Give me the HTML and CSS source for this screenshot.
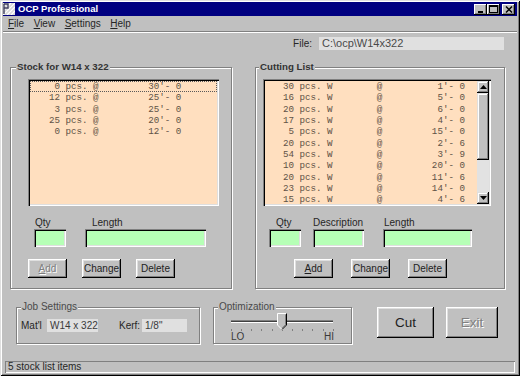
FILE: index.html
```html
<!DOCTYPE html>
<html lang="en">
<head>
<meta charset="utf-8">
<title>OCP Professional</title>
<link rel="stylesheet" href="styles.css">
</head>
<body>
<div class="window">
  <div class="titlebar">
    <svg class="app-icon" width="12" height="12" viewBox="0 0 12 12">
      <rect x="0" y="0" width="12" height="12" fill="#d8d8d8"/>
      <path d="M0 4 L4 0 M0 8 L8 0 M0 12 L12 0 M4 12 L12 4 M8 12 L12 8" stroke="#ffffff" stroke-width="1.2"/>
      <path d="M1 1 V11 M1 1 H5 V5 H1" stroke="#404060" stroke-width="1.4" fill="none"/>
    </svg>
    <span class="title-text">OCP Professional</span>
    <div class="win-btns">
      <span class="win-btn"><svg width="8" height="7" viewBox="0 0 8 7"><rect x="1" y="5" width="5" height="2" fill="#000"/></svg></span>
      <span class="win-btn"><svg width="9" height="8" viewBox="0 0 9 8"><rect x="0.5" y="0.5" width="8" height="7" fill="none" stroke="#000"/><rect x="0" y="0" width="9" height="2" fill="#000"/></svg></span>
      <span class="win-btn close"><svg width="8" height="7" viewBox="0 0 8 7"><path d="M1 0.5 L7 6.5 M7 0.5 L1 6.5" stroke="#000" stroke-width="1.5"/></svg></span>
    </div>
  </div>

  <div class="menubar">
    <span class="menu-item"><u>F</u>ile</span>
    <span class="menu-item"><u>V</u>iew</span>
    <span class="menu-item"><u>S</u>ettings</span>
    <span class="menu-item"><u>H</u>elp</span>
  </div>

  <div class="client">
    <div class="file-row">
      <span class="file-label">File:</span>
      <div class="file-field">C:\ocp\W14x322</div>
    </div>

    <div class="groups">
      <div class="group stock">
        <div class="group-title strong">Stock for W14 x 322</div>
        <div class="listbox stock-list">
          <div class="list-lines stock-lines">
            <div class="row focused"> 0 pcs. @         30'- 0</div>
            <div class="row">12 pcs. @         25'- 0</div>
            <div class="row"> 3 pcs. @         25'- 0</div>
            <div class="row">25 pcs. @         20'- 0</div>
            <div class="row"> 0 pcs. @         12'- 0</div>
          </div>
        </div>
        <div class="fields stock-fields">
          <div class="field">
            <span class="field-label ind-1">Qty</span>
            <div class="input w-qty"></div>
          </div>
          <div class="field gap-19">
            <span class="field-label ind-7">Length</span>
            <div class="input w-len-stock"></div>
          </div>
        </div>
        <div class="buttons stock-buttons">
          <span class="btn disabled"><span><u>A</u>dd</span></span>
          <span class="btn">Change</span>
          <span class="btn">Delete</span>
        </div>
      </div>

      <div class="group cutting">
        <div class="group-title strong cut-title">Cutting List</div>
        <div class="listbox cut-list">
          <div class="list-lines cut-lines">
            <div class="row">30 pcs. W        @          1'- 0</div>
            <div class="row">16 pcs. W        @          5'- 0</div>
            <div class="row">20 pcs. W        @          6'- 0</div>
            <div class="row">17 pcs. W        @          4'- 0</div>
            <div class="row"> 5 pcs. W        @         15'- 0</div>
            <div class="row">20 pcs. W        @          2'- 6</div>
            <div class="row">54 pcs. W        @          3'- 9</div>
            <div class="row">10 pcs. W        @         20'- 0</div>
            <div class="row">20 pcs. W        @         11'- 6</div>
            <div class="row">23 pcs. W        @         14'- 0</div>
            <div class="row">15 pcs. W        @          4'- 6</div>
          </div>
          <div class="scrollbar">
            <div class="sb-btn"><svg width="7" height="4" viewBox="0 0 7 4"><path d="M3.5 0 L7 4 H0 Z" fill="#000"/></svg></div>
            <div class="sb-thumb"></div>
            <div class="sb-track"></div>
            <div class="sb-btn"><svg width="7" height="4" viewBox="0 0 7 4"><path d="M0 0 H7 L3.5 4 Z" fill="#000"/></svg></div>
          </div>
        </div>
        <div class="fields cut-fields">
          <div class="field">
            <span class="field-label ind-7">Qty</span>
            <div class="input w-qty"></div>
          </div>
          <div class="field gap-12">
            <span class="field-label ind-0">Description</span>
            <div class="input w-desc"></div>
          </div>
          <div class="field gap-19">
            <span class="field-label ind-1">Length</span>
            <div class="input w-len-cut"></div>
          </div>
        </div>
        <div class="buttons cut-buttons">
          <span class="btn"><span><u>A</u>dd</span></span>
          <span class="btn">Change</span>
          <span class="btn">Delete</span>
        </div>
      </div>
    </div>

    <div class="bottom-row">
      <div class="group job">
        <div class="group-title light">Job Settings</div>
        <div class="job-row">
          <span class="job-label mat">Mat'l</span>
          <div class="flat-field w-mat">W14 x 322</div>
          <span class="job-label kerf">Kerf:</span>
          <div class="flat-field w-kerf">1/8"</div>
        </div>
      </div>

      <div class="group opt">
        <div class="group-title light">Optimization</div>
        <svg class="slider" width="108" height="20" viewBox="0 0 108 20">
          <rect x="2" y="8" width="102" height="1" fill="#808080"/>
          <rect x="2" y="9" width="102" height="1" fill="#404040"/>
          <rect x="2" y="10" width="102" height="1" fill="#ffffff"/>
          <g fill="#808080">
            <rect x="2" y="17" width="1" height="2"/>
            <rect x="12" y="17" width="1" height="2"/>
            <rect x="22" y="17" width="1" height="2"/>
            <rect x="32" y="17" width="1" height="2"/>
            <rect x="43" y="17" width="1" height="2"/>
            <rect x="53" y="17" width="1" height="2"/>
            <rect x="63" y="17" width="1" height="2"/>
            <rect x="73" y="17" width="1" height="2"/>
            <rect x="83" y="17" width="1" height="2"/>
            <rect x="94" y="17" width="1" height="2"/>
            <rect x="104" y="17" width="1" height="2"/>
          </g>
          <path d="M48 1 H58 V13 L53 18 L48 13 Z" fill="#c0c0c0"/>
          <path d="M48.5 13 V1.5 H57.5" fill="none" stroke="#ffffff"/>
          <path d="M57.5 1.5 V13 L53 17.5" fill="none" stroke="#000000"/>
          <path d="M56.5 2.5 V12.6 L53 16.2" fill="none" stroke="#808080"/>
          <path d="M48.5 13 L53 17.5" fill="none" stroke="#ffffff"/>
        </svg>
        <div class="lohi"><span>LO</span><span>HI</span></div>
      </div>

      <span class="big-btn cut-btn">Cut</span>
      <span class="big-btn exit-btn disabled">Exit</span>
    </div>
  </div>

  <div class="statusbar">5 stock list items</div>
</div>
</body>
</html>
```

FILE: styles.css
```css
* { box-sizing: border-box; }

html, body {
  margin: 0;
  padding: 0;
}

body {
  width: 520px;
  height: 376px;
  overflow: hidden;
  background: #c0c0c0;
  font-family: "Liberation Sans Narrow", "Arial Narrow", "Liberation Sans", Arial, sans-serif;
  font-size: 10px;
  color: #262626;
}

.window {
  width: 520px;
  height: 376px;
  padding: 2px 3px 3px 3px;
  background: #c0c0c0;
  display: flex;
  flex-direction: column;
  box-shadow: inset 1px 1px #dfdfdf, inset -1px -1px #000, inset 2px 2px #fff, inset -2px -2px #808080;
}

/* title bar */
.titlebar {
  flex: none;
  height: 14px;
  background: #000080;
  color: #fff;
  display: flex;
  align-items: center;
}

.app-icon {
  flex: none;
  margin: 0 3px 0 0;
}

.title-text {
  flex: 1;
  font-family: "Liberation Sans", Arial, sans-serif;
  font-weight: bold;
  font-size: 9.5px;
  line-height: 14px;
}

.win-btns {
  display: flex;
  margin-right: 2px;
}

.win-btn {
  width: 13px;
  height: 11px;
  background: #c0c0c0;
  display: flex;
  align-items: center;
  justify-content: center;
  box-shadow: inset -1px -1px #000, inset 1px 1px #fff, inset -2px -2px #808080;
}

.win-btn.close { margin-left: 2px; }

/* menu */
.menubar {
  flex: none;
  height: 16px;
  display: flex;
  align-items: center;
  border-bottom: 1px solid #808080;
  box-shadow: 0 1px #fff;
}

.menu-item {
  padding: 0 4.5px 0 5px;
  line-height: 14px;
}

/* client */
.client {
  flex: 1;
  display: flex;
  flex-direction: column;
}

.file-row {
  margin-top: 5px;
  height: 13px;
  display: flex;
  justify-content: flex-end;
  align-items: center;
  padding-right: 13px;
}

.file-label { margin-right: 7px; }

.file-field {
  width: 185px;
  height: 13px;
  background: #e0e0e0;
  padding-left: 3px;
  line-height: 13px;
  font-size: 11px;
  color: #4a4a4a;
}

/* groups */
.groups {
  display: flex;
  margin-top: 17px;
}

.group {
  flex: none;
  border: 1px solid #808080;
  box-shadow: inset 1px 1px #fff, 1px 1px #fff;
}

.group-title {
  width: max-content;
  height: 12px;
  line-height: 12px;
  margin: -7px 0 -5px 5px;
  padding: 0 1px;
  background: #c0c0c0;
}

.group-title.strong {
  font-family: "Liberation Sans", Arial, sans-serif;
  font-weight: bold;
  font-size: 9.7px;
  color: #333;
}

.group-title.light {
  color: #4a4a4a;
  margin-left: 4px;
}

.cut-title { margin-left: 3px; }

.stock {
  margin-left: 7px;
  width: 222px;
  height: 222px;
}

.cutting {
  margin-left: 23px;
  width: 250px;
  height: 222px;
}

/* list boxes */
.listbox {
  margin-top: 11px;
  height: 127px;
  padding: 2px;
  display: flex;
  background: #ffdfbf;
  box-shadow: inset 1px 1px #808080, inset 2px 2px #000, inset -1px -1px #fff, inset -2px -2px #dfdfdf;
}

.stock-list {
  margin-left: 17px;
  width: 191px;
}

.cut-list {
  margin-left: 7px;
  width: 228px;
}

.list-lines {
  flex: 1;
  font-family: "Liberation Mono", "Courier New", monospace;
  font-size: 9.2px;
  color: #5e5246;
  overflow: hidden;
}

.stock-lines { padding-left: 19px; }
.cut-lines { padding-left: 18px; }

.row {
  height: 11.35px;
  line-height: 11.35px;
  white-space: pre;
}

.row.focused {
  margin-left: -19px;
  padding-left: 19px;
  outline: 1px dotted #5a5a5a;
  outline-offset: -1px;
}

.scrollbar {
  flex: none;
  width: 12px;
  display: flex;
  flex-direction: column;
}

.sb-btn,
.sb-thumb {
  background: #c0c0c0;
  box-shadow: inset -1px -1px #000, inset 1px 1px #dfdfdf, inset -2px -2px #808080, inset 2px 2px #fff;
}

.sb-btn {
  height: 12px;
  display: flex;
  align-items: center;
  justify-content: center;
}

.sb-thumb { height: 67px; }

.sb-track {
  flex: 1;
  background: #e2e2e2;
}

/* input fields */
.fields {
  display: flex;
  margin-top: 11px;
}

.stock-fields { margin-left: 23px; }
.cut-fields { margin-left: 13px; }

.field {
  display: flex;
  flex-direction: column;
}

.gap-12 { margin-left: 12px; }
.gap-19 { margin-left: 19px; }

.field-label {
  height: 12px;
  line-height: 12px;
}

.ind-0 { margin-left: 0; }
.ind-1 { margin-left: 1px; }
.ind-7 { margin-left: 7px; }

.input {
  height: 18px;
  background: #b6ffb6;
  box-shadow: inset 1px 1px #808080, inset 2px 2px #000, inset -1px -1px #fff, inset -2px -2px #dfdfdf;
}

.w-qty { width: 32px; }
.w-len-stock { width: 121px; }
.w-desc { width: 51px; }
.w-len-cut { width: 89px; }

/* buttons */
.buttons {
  display: flex;
  margin-top: 12px;
}

.stock-buttons { margin-left: 17px; gap: 15px; }
.cut-buttons { margin-left: 38px; gap: 18px; }

.btn,
.big-btn {
  flex: none;
  background: #c0c0c0;
  display: flex;
  align-items: center;
  justify-content: center;
  color: #1e1e1e;
  box-shadow: inset -1px -1px #000, inset 1px 1px #fff, inset -2px -2px #808080, inset 2px 2px #dfdfdf;
}

.btn {
  width: 39px;
  height: 19px;
}

.disabled {
  color: #808080;
  text-shadow: 1px 1px #fff;
}

/* bottom row */
.bottom-row {
  display: flex;
  align-items: flex-start;
  margin-top: 18px;
}

.job {
  margin-left: 13px;
  width: 184px;
  height: 37px;
}

.opt {
  margin-left: 13px;
  width: 139px;
  height: 37px;
}

.job-row {
  display: flex;
  align-items: center;
  margin: 11px 0 0 4px;
}

.job-label { line-height: 13px; }
.mat { width: 26px; }
.kerf { width: 23px; margin-left: 21px; }

.flat-field {
  height: 13px;
  line-height: 13px;
  padding-left: 3px;
  background: #e0e0e0;
  color: #3a3a3a;
}

.w-mat { width: 51px; }
.w-kerf { width: 45px; }

.slider {
  display: block;
  margin: 4px 0 0 15px;
}

.lohi {
  width: 103px;
  margin-left: 17px;
  display: flex;
  justify-content: space-between;
  line-height: 10px;
  color: #3a3a3a;
}

.big-btn {
  height: 31px;
  line-height: 31px;
  font-family: "Liberation Sans", Arial, sans-serif;
  font-size: 13.5px;
}

.cut-btn {
  width: 57px;
  margin-left: 25px;
}

.exit-btn {
  width: 52px;
  margin-left: 12px;
}

/* status bar */
.statusbar {
  flex: none;
  height: 12px;
  margin: 0 2px;
  padding-left: 3px;
  line-height: 12px;
  box-shadow: inset 1px 1px #808080, inset -1px -1px #fff;
}
```
